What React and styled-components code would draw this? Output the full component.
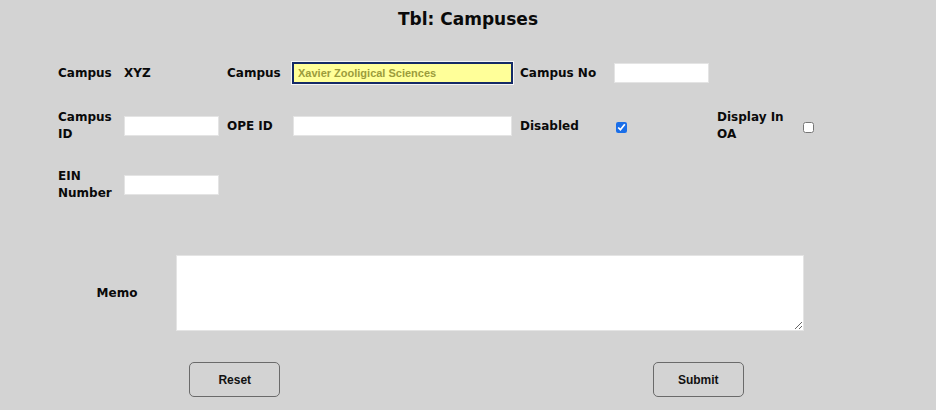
import React from 'react'
import styled, { createGlobalStyle } from 'styled-components'

const GlobalStyle = createGlobalStyle`
  body {
    margin: 0;
    background: #d3d3d3;
    font-family: "DejaVu Sans", "Liberation Sans", sans-serif;
    color: #0a0a0a;
  }
`

const Page = styled.div`
  padding-top: 7px;
`

const Title = styled.h1`
  margin: 0;
  text-align: center;
  font-size: 17px;
  line-height: 24px;
  font-weight: bold;
`

const Fields = styled.div`
  display: flex;
  flex-direction: column;
  gap: 25px;
  margin-top: 31px;
  padding-left: 58px;
`

const FieldRow = styled.div`
  display: grid;
  grid-template-columns: 66px 103px 66px 227px 94px 103px 86px auto;
  align-items: center;
`

const Label = styled.span`
  font-size: 12px;
  font-weight: bold;
  line-height: 17px;
  padding-right: 4px;
`

const Value = styled(Label)``

const TextBox = styled.input`
  box-sizing: border-box;
  width: ${p => (p.wide ? '219px' : '95px')};
  height: 20px;
  margin: 0;
  padding: 0 4px;
  border: 1px solid #e4e4e4;
  background: #fff;
  font-family: "Liberation Sans", Arial, sans-serif;
  font-size: 11px;
  font-weight: bold;
`

const FocusedBox = styled(TextBox)`
  width: 221px;
  height: 22px;
  margin-left: -1px;
  border: 2px solid #142a66;
  box-shadow: 0 0 0 1px #f4f4f4;
  background: #ffff99;
  color: #9c9c3c;
  outline: none;
`

const Check = styled.input.attrs({ type: 'checkbox' })`
  width: 11px;
  height: 11px;
  margin: 2px 0 0 ${p => (p.flush ? '0' : '2px')};
  accent-color: #1a6ee8;
`

const MemoRow = styled.div`
  display: grid;
  grid-template-columns: 118px 628px;
  align-items: center;
  margin-top: 53px;
  padding-left: 58px;
`

const MemoLabel = styled(Label)`
  text-align: center;
  padding: 0;
`

const Memo = styled.textarea`
  display: block;
  box-sizing: border-box;
  width: 628px;
  height: 76px;
  margin: 0;
  border: 1px solid #e4e4e4;
  background: #fff;
`

const Buttons = styled.div`
  display: grid;
  grid-template-columns: 1fr 1fr;
  justify-items: center;
  margin-top: 31px;
  padding: 0 6px 0 3px;
`

const Button = styled.button`
  width: 91px;
  height: 35px;
  border: 1px solid #6a6a6a;
  border-radius: 5px;
  background: transparent;
  font-family: "Liberation Sans", Arial, sans-serif;
  font-size: 12px;
  font-weight: bold;
  color: #111;
`

export default function App() {
  return (
    <Page>
      <GlobalStyle />
      <Title>Tbl: Campuses</Title>
      <Fields>
        <FieldRow>
          <Label>Campus</Label>
          <Value>XYZ</Value>
          <Label>Campus</Label>
          <FocusedBox defaultValue="Xavier Zooligical Sciences" />
          <Label>Campus No</Label>
          <TextBox />
        </FieldRow>
        <FieldRow>
          <Label>Campus ID</Label>
          <TextBox />
          <Label>OPE ID</Label>
          <TextBox wide />
          <Label>Disabled</Label>
          <Check defaultChecked />
          <Label>Display In OA</Label>
          <Check flush />
        </FieldRow>
        <FieldRow>
          <Label>EIN Number</Label>
          <TextBox />
        </FieldRow>
      </Fields>
      <MemoRow>
        <MemoLabel>Memo</MemoLabel>
        <Memo />
      </MemoRow>
      <Buttons>
        <Button>Reset</Button>
        <Button>Submit</Button>
      </Buttons>
    </Page>
  )
}
